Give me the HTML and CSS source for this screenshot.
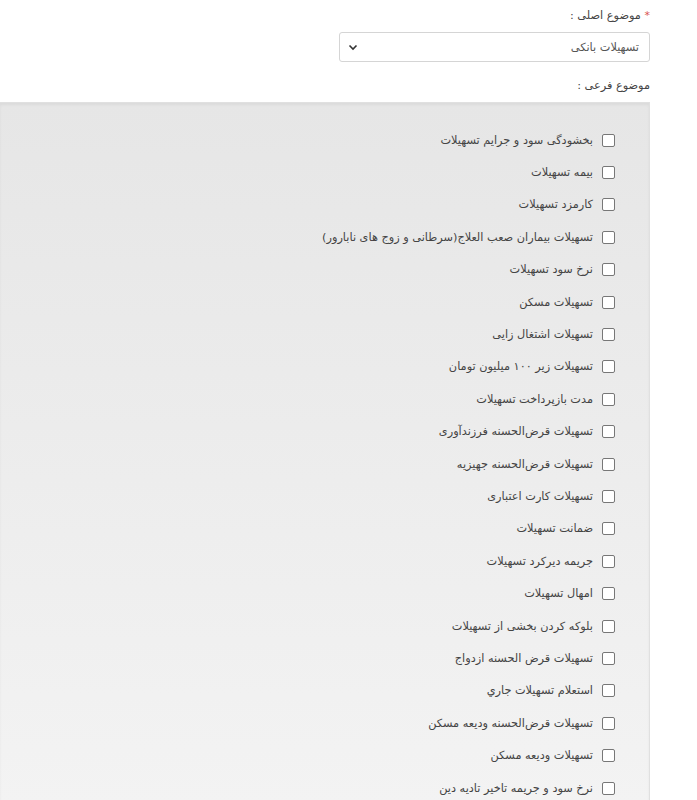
FILE: index.html
```html
<!DOCTYPE html>
<html lang="fa" dir="rtl">
<head>
<meta charset="utf-8">
<link rel="stylesheet" href="styles.css">
</head>
<body>
<div class="form">
  <div class="field-label"><span class="req">*</span> موضوع اصلی :</div>
  <div class="select">
    <span class="select-text">تسهیلات بانکی</span>
    <svg class="chev" width="10" height="7" viewBox="0 0 10 7"><path d="M1.5 1.5 L5 5 L8.5 1.5" fill="none" stroke="#333" stroke-width="1.6"/></svg>
  </div>
  <div class="field-label sub">موضوع فرعی :</div>
  <div class="panel">
    <ul class="list">
      <li><span class="cb"></span><span>بخشودگی سود و جرایم تسهیلات</span></li>
      <li><span class="cb"></span><span>بیمه تسهیلات</span></li>
      <li><span class="cb"></span><span>کارمزد تسهیلات</span></li>
      <li><span class="cb"></span><span>تسهیلات بیماران صعب العلاج(سرطانی و زوج های نابارور)</span></li>
      <li><span class="cb"></span><span>نرخ سود تسهیلات</span></li>
      <li><span class="cb"></span><span>تسهیلات مسکن</span></li>
      <li><span class="cb"></span><span>تسهیلات اشتغال زایی</span></li>
      <li><span class="cb"></span><span>تسهیلات زیر ۱۰۰ میلیون تومان</span></li>
      <li><span class="cb"></span><span>مدت بازپرداخت تسهیلات</span></li>
      <li><span class="cb"></span><span>تسهیلات قرض‌الحسنه فرزندآوری</span></li>
      <li><span class="cb"></span><span>تسهیلات قرض‌الحسنه جهیزیه</span></li>
      <li><span class="cb"></span><span>تسهیلات کارت اعتباری</span></li>
      <li><span class="cb"></span><span>ضمانت تسهیلات</span></li>
      <li><span class="cb"></span><span>جریمه دیرکرد تسهیلات</span></li>
      <li><span class="cb"></span><span>امهال تسهیلات</span></li>
      <li><span class="cb"></span><span>بلوکه کردن بخشی از تسهیلات</span></li>
      <li><span class="cb"></span><span>تسهیلات قرض الحسنه ازدواج</span></li>
      <li><span class="cb"></span><span>استعلام تسهیلات جاري</span></li>
      <li><span class="cb"></span><span>تسهیلات قرض‌الحسنه ودیعه مسکن</span></li>
      <li><span class="cb"></span><span>تسهیلات ودیعه مسکن</span></li>
      <li><span class="cb"></span><span>نرخ سود و جریمه تاخیر تادیه دین</span></li>
    </ul>
  </div>
</div>
</body>
</html>
```
FILE: styles.css
```css
html, body {
  margin: 0;
  padding: 0;
  background: #fff;
}
body {
  font-family: "DejaVu Sans", sans-serif;
  font-size: 11.3px;
  color: #444;
  overflow: hidden;
}
.form {
  padding: 6px 47px 0 0;
}
.field-label {
  height: 20px;
  line-height: 20px;
  color: #444;
}
.req {
  color: #d9534f;
  font-size: 11px;
}
.select {
  margin-top: 6px;
  margin-left: auto;
  margin-right: 0;
  width: 291px;
  height: 28px;
  border: 1px solid #d5d5d5;
  border-radius: 3px;
  display: flex;
  align-items: center;
  justify-content: space-between;
  padding: 0 10px 0 8px;
  color: #555;
  background: #fff;
}
.sub {
  margin-top: 14px;
}
.panel {
  margin-top: 6px;
  background: linear-gradient(#e6e6e6, #f3f3f3 700px);
  border: 1px solid #e0e0e0;
  border-left: none;
  box-shadow: inset 0 2px 3px rgba(0,0,0,0.05);
  min-height: 720px;
}
.list {
  list-style: none;
  margin: 0;
  padding: 21px 34px 0 0;
}
.list li {
  height: 32.4px;
  display: flex;
  align-items: center;
  gap: 9px;
  color: #444;
}
.cb {
  width: 11px;
  height: 11px;
  border: 1px solid #777;
  border-radius: 2px;
  background: #fff;
  flex: none;
}
```
